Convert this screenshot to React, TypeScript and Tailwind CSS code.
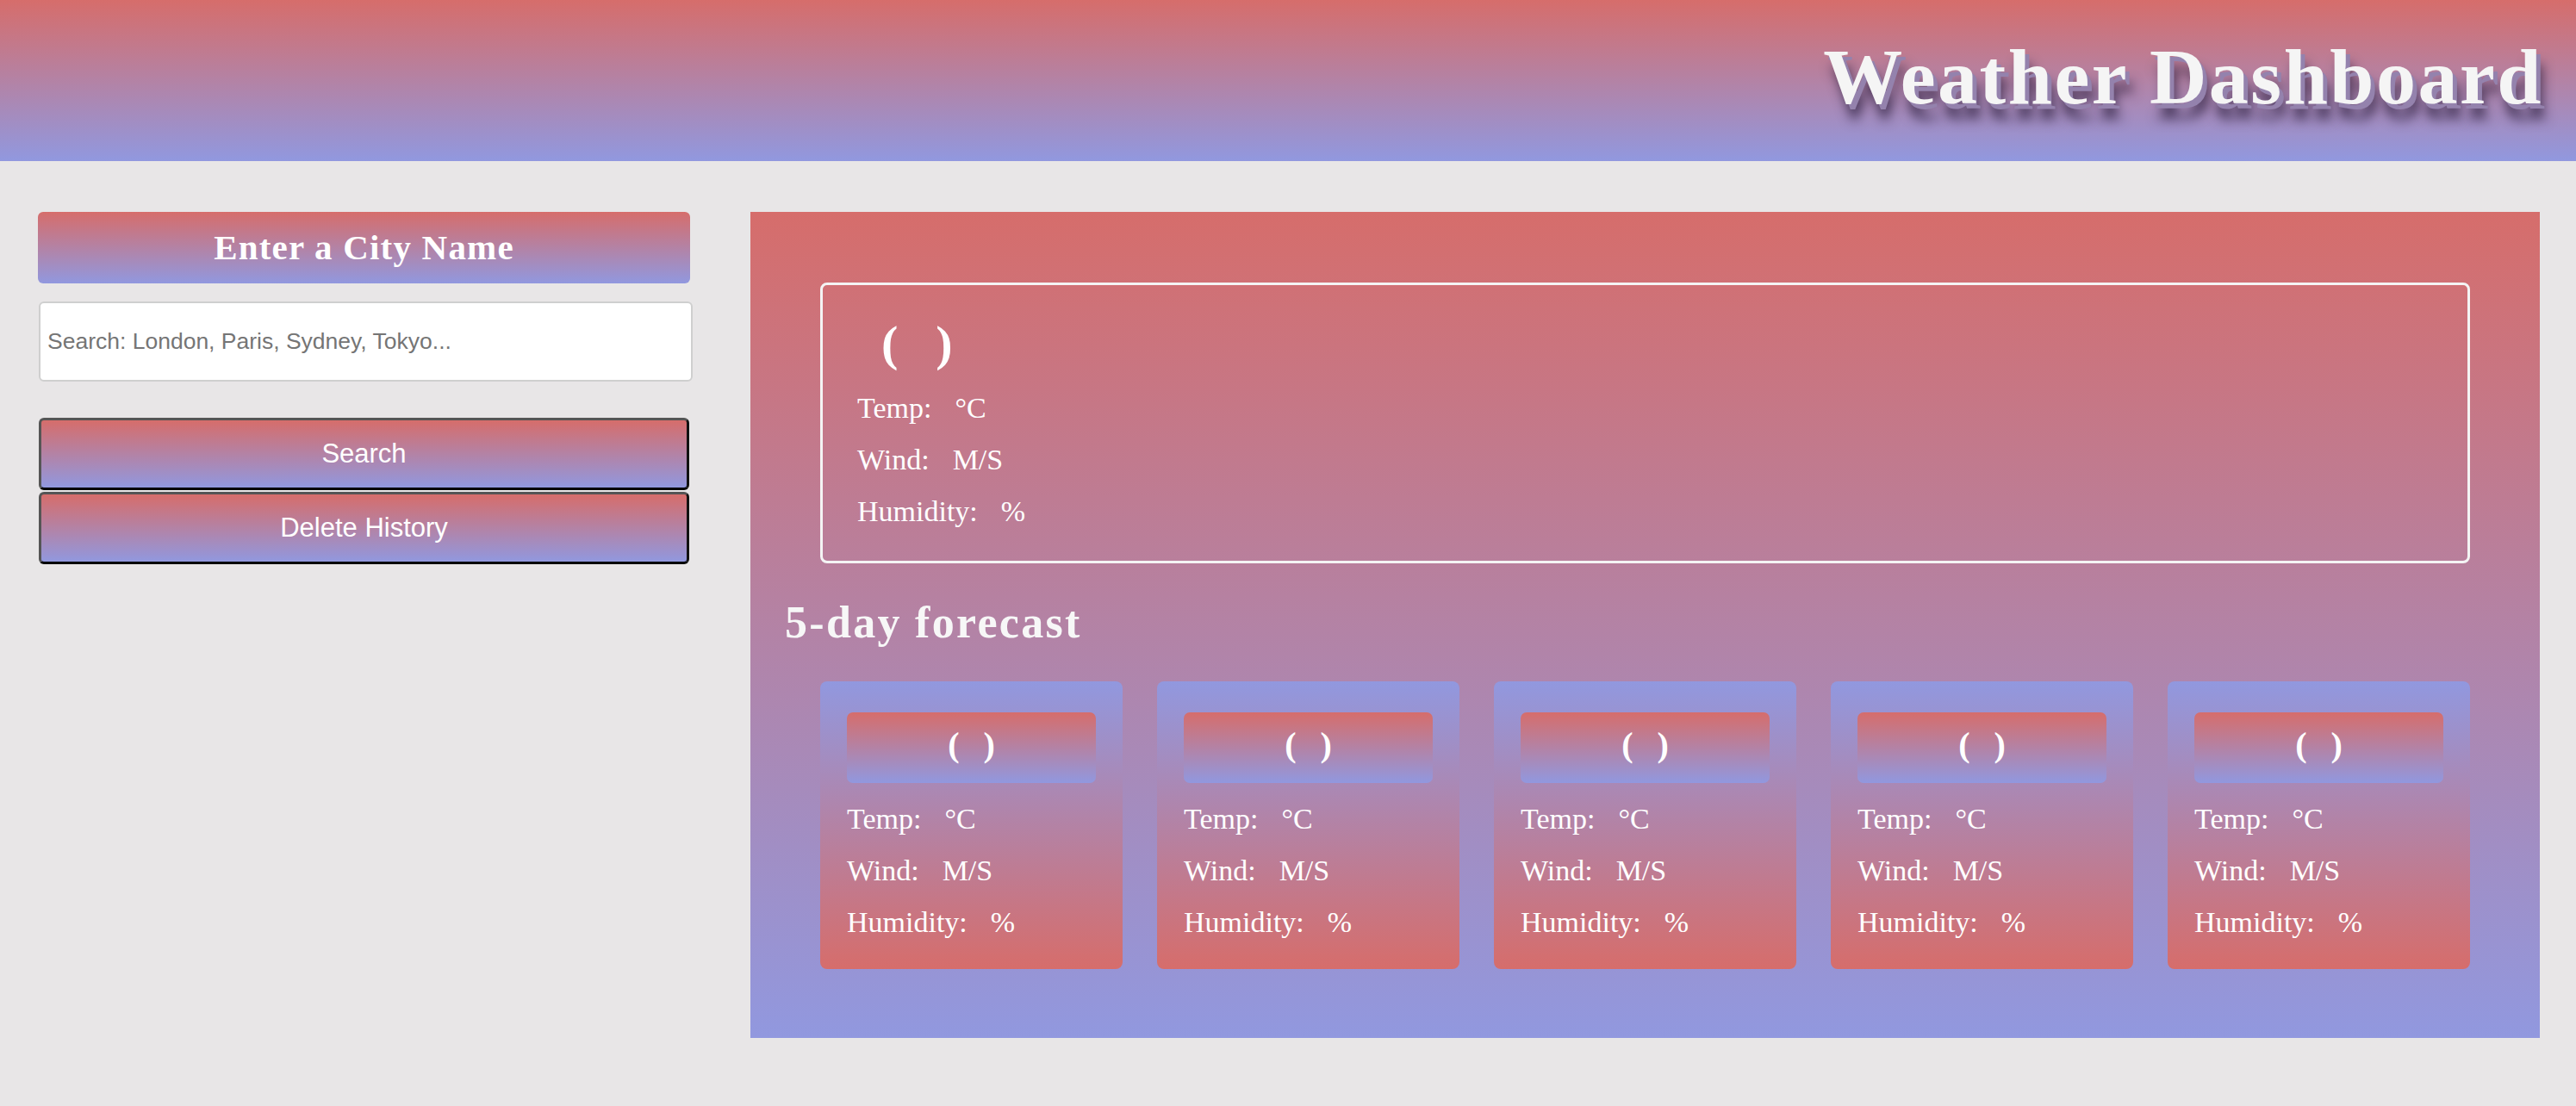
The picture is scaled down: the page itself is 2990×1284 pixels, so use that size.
import React from 'react';

const days = [1, 2, 3, 4, 5];

const Stats: React.FC = () => (
  <div>
    <p className="h-[60px] leading-[60px] text-[34px]">
      Temp:<span className="ml-[27px]">°C</span>
    </p>
    <p className="h-[60px] leading-[60px] text-[34px]">
      Wind:<span className="ml-[27px]">M/S</span>
    </p>
    <p className="h-[60px] leading-[60px] text-[34px]">
      Humidity:<span className="ml-[27px]">%</span>
    </p>
  </div>
);

const ForecastCard: React.FC = () => (
  <div className="h-[334px] rounded-[8px] bg-[linear-gradient(#9198df,#d66d6b)] pt-[36px] px-[31px]">
    <div className="h-[82px] rounded-[7px] bg-[linear-gradient(#d66d6b,#9198df)] flex items-center justify-center gap-[28px] pb-[6px] font-bold text-[40px] leading-[50px]">
      <span>(</span>
      <span>)</span>
    </div>
    <div className="mt-[12px]">
      <Stats />
    </div>
  </div>
);

const App: React.FC = () => {
  return (
    <div className="min-h-screen bg-[#e8e6e7] text-white font-['Liberation_Serif',serif]">
      {/* Header */}
      <header className="h-[187px] bg-[linear-gradient(#d66d6b,#9198df)] flex items-center justify-end pr-[38px] pb-[8px]">
        <h1 className="font-bold text-[92px] leading-[1.15] tracking-[2.5px] text-[#f5f5f5] [text-shadow:5px_6px_0_#9482ad,7px_18px_14px_rgba(25,15,45,0.7)]">
          Weather Dashboard
        </h1>
      </header>

      <main className="flex items-start pl-[44px] pt-[59px] pb-[79px]">
        {/* Search column */}
        <aside className="w-[757px] shrink-0 flex flex-col">
          <h2 className="h-[83px] rounded-[6px] bg-[linear-gradient(#d66d6b,#9198df)] flex items-center justify-center font-bold text-[41px] tracking-[1.2px]">
            Enter a City Name
          </h2>
          <input
            type="text"
            placeholder="Search: London, Paris, Sydney, Tokyo..."
            className="mt-[21px] ml-[1px] h-[93px] w-[759px] rounded-[6px] border-2 border-[#cfcfcf] bg-white pl-[8px] font-['Liberation_Sans',Arial,sans-serif] text-[26.5px] text-[#333] placeholder:text-[#757575] outline-none"
          />
          <button className="mt-[42px] ml-[1px] h-[84px] w-[755px] rounded-[6px] border-[3px] border-t-[#555] border-l-[#555] border-r-[#111] border-b-black bg-[linear-gradient(#d66d6b,#9198df)] font-['Liberation_Sans',Arial,sans-serif] text-[31px] text-white">
            Search
          </button>
          <button className="mt-[2px] ml-[1px] h-[84px] w-[755px] rounded-[6px] border-[3px] border-t-[#555] border-l-[#555] border-r-[#111] border-b-black bg-[linear-gradient(#d66d6b,#9198df)] font-['Liberation_Sans',Arial,sans-serif] text-[31px] text-white">
            Delete History
          </button>
        </aside>

        {/* Weather panel */}
        <section className="ml-[70px] w-[2077px] h-[959px] shrink-0 bg-[linear-gradient(#d66d6b,#9198df)] px-[40px] pt-[82px]">
          <div className="mx-[41px] h-[326px] rounded-[8px] border-[3px] border-[#f4f4f4] pl-[40px] pt-[38px]">
            <div className="h-[60px] flex items-center gap-[44px] pl-[28px] font-bold text-[58px] leading-[60px]">
              <span>(</span>
              <span>)</span>
            </div>
            <div className="mt-[15px]">
              <Stats />
            </div>
          </div>

          <h2 className="mt-[39px] h-[60px] leading-[60px] font-bold text-[52px] tracking-[2.3px] text-[#f7f7f7]">
            5-day forecast
          </h2>

          <div className="mt-[38px] mx-[41px] grid grid-cols-5 gap-[40px]">
            {days.map((d) => (
              <ForecastCard key={d} />
            ))}
          </div>
        </section>
      </main>
    </div>
  );
};

export default App;
